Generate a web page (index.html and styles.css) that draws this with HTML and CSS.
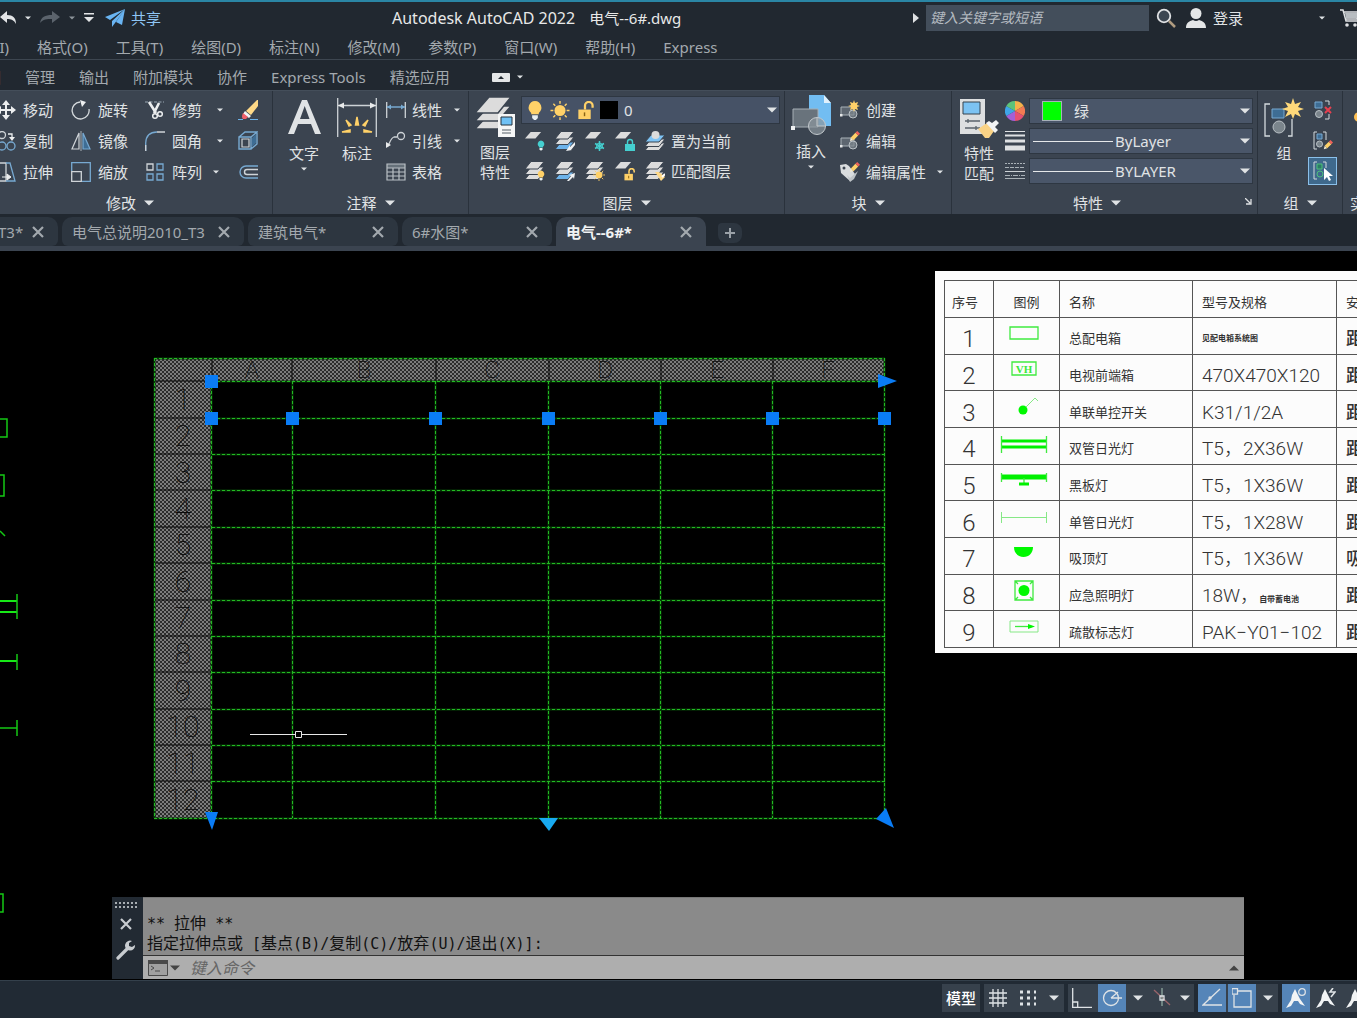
FILE: index.html
```
<!DOCTYPE html>
<html lang="zh-CN">
<head>
<meta charset="utf-8">
<meta name="viewport" content="width=device-width, initial-scale=1">
<title>Autodesk AutoCAD 2022 电气--6#.dwg</title>
<link rel="stylesheet" href="styles.css">
</head>
<body>
<svg class="sprite" aria-hidden="true">
  <defs>
    <symbol id="caret" viewBox="0 0 10 6"><path d="M0 0.500h10L5 5.500z" fill="currentColor"/></symbol>
    <symbol id="close" viewBox="0 0 12 12"><path d="M1 1l10 10M11 1L1 11" stroke="currentColor" stroke-width="2.200" fill="none"/></symbol>
    <symbol id="sheet" viewBox="0 0 20 20"><path d="M6 1h11l-6 7H0z" fill="#dcdcdc"/></symbol>
    <symbol id="stack" viewBox="0 0 20 20"><g fill="#dcdcdc" stroke="#3b4450"><path d="M6 11h13l-6 7.500H0z"/><path d="M6 6h13l-6 7.500H0z"/><path d="M6 0.500h13l-6 7.500H0z"/></g></symbol>
    <symbol id="stack-blue" viewBox="0 0 20 20"><g fill="#dcdcdc" stroke="#3b4450"><path d="M6 11h13l-6 7.500H0z" fill="#6db3ea"/><path d="M6 6h13l-6 7.500H0z"/><path d="M6 0.500h13l-6 7.500H0z"/></g></symbol>
    <symbol id="lock" viewBox="0 0 20 20"><path d="M3 9h13v10H3z" fill="currentColor"/><path d="M10 9V5a3.500 3.500 0 0 1 8 0v2" stroke="currentColor" stroke-width="2.400" fill="none"/><path d="M9.500 12v4" stroke="#8a6414" stroke-width="1.500"/></symbol>
    <symbol id="bulb" viewBox="0 0 20 20"><path d="M10 0a7 7 0 0 0-4 12.500V14h8v-1.500A7 7 0 0 0 10 0z" fill="currentColor"/><path d="M7 15h6v3l-2 2H9l-2-2z" fill="#e8eef0"/></symbol>
    <symbol id="sun" viewBox="0 0 20 20"><circle cx="10" cy="10" r="5.800" fill="#ffd168"/><path d="M10 0v3M10 17v3M0 10h3M17 10h3M3 3l2 2M15 15l2 2M17 3l-2 2M5 15l-2 2" stroke="#ffd168" stroke-width="1.500"/></symbol>
    <symbol id="pencil" viewBox="0 0 12 12"><path d="M1 11l1-4 3 3z" fill="#f3ead0"/><path d="M2 7l5-5 3 3-5 5z" fill="#ffd168"/><path d="M7 2l2-2 3 3-2 2z" fill="#f0625a"/></symbol>
    <symbol id="block" viewBox="0 0 20 20"><path d="M1 7h13v8H1z" fill="#5d6670" stroke="#aab2b8"/><circle cx="13" cy="14" r="4" fill="#7d878e" fill-opacity=".7" stroke="#b9c0c5"/><path d="M0 14h2.500v2.500H0z" fill="#e4e6e7"/></symbol>
    <symbol id="person-mark" viewBox="0 0 20 20"><path d="M9 1l3 6 2 4 5 7-5-2-2-3h-4l-3 5-5 2 5-8 1-5z" fill="#f2f4f5"/></symbol>
  </defs>
</svg>

<header class="titlebar">
  <div class="quick-access">
    <button aria-label="放弃"><svg width="16" height="14" viewBox="0 0 16 14"><path d="M0 6l7-6v4c6 0 9 3 9 9-2-4-5-5-9-5v4z" fill="#e2e4e6"/></svg></button>
    <button aria-label="放弃列表"><svg class="caret-s"><use href="#caret"/></svg></button>
    <button aria-label="重做" class="faded"><svg width="20" height="13" viewBox="0 0 20 13"><path d="M20 6l-8-6v4C5 4 1 6 0 12c3-4 7-4 12-4v4z" fill="#5b636c"/></svg></button>
    <button aria-label="重做列表"><svg class="caret-s dim"><use href="#caret"/></svg></button>
    <button aria-label="自定义快速访问工具栏"><svg width="10" height="10" viewBox="0 0 10 10"><path d="M0 0h10v1.500H0zM0 4h10L5 9z" fill="#e2e4e6"/></svg></button>
    <a class="share" href="#share"><svg width="20" height="18" viewBox="0 0 20 18"><path d="M20 0L0 8l5 3zM20 0L7 12v6l3-4zM20 0l-9 13 6 3z" fill="#69b4f2"/></svg>共享</a>
  </div>
  <h1 class="app-title">Autodesk AutoCAD 2022<span>电气--6#.dwg</span></h1>
  <div class="account">
    <svg class="search-toggle" width="6" height="10" viewBox="0 0 6 10"><path d="M0 0l6 5-6 5z" fill="#dfe1e3"/></svg>
    <input class="search" type="text" aria-label="搜索" placeholder="键入关键字或短语">
    <button aria-label="搜索"><svg width="20" height="20" viewBox="0 0 20 20"><circle cx="8" cy="8" r="6.300" fill="#3d4752" stroke="#dfe1e3" stroke-width="1.800"/><path d="M13 13l6 6" stroke="#b09c80" stroke-width="2.500"/></svg></button>
    <button class="login"><svg width="20" height="20" viewBox="0 0 20 20"><circle cx="10" cy="5.500" r="5.500" fill="#e4e6e7"/><path d="M0 20c0-5 3-7 7-8q3 2 6 0c4 1 7 3 7 8z" fill="#e4e6e7"/></svg>登录</button>
    <button class="account-menu" aria-label="账户菜单"><svg class="caret-s"><use href="#caret"/></svg></button>
    <button aria-label="应用商店"><svg width="20" height="18" viewBox="0 0 20 18"><path d="M0 1h3l3 11h12M4 3h15l-2 7H6" fill="none" stroke="#dfe1e3" stroke-width="1.500"/><path d="M5 4h13l-1 5H6z" fill="#b8bdc1"/><circle cx="7" cy="16" r="1.800" fill="#dfe1e3"/><circle cx="15" cy="16" r="1.800" fill="#dfe1e3"/></svg></button>
  </div>
</header>

<nav class="menubar" aria-label="菜单">
  <a href="#insert">插入(I)</a><a href="#format">格式(O)</a><a href="#tools">工具(T)</a><a href="#draw">绘图(D)</a><a href="#dimension">标注(N)</a><a href="#modify">修改(M)</a><a href="#parametric">参数(P)</a><a href="#window">窗口(W)</a><a href="#help">帮助(H)</a><a href="#express">Express</a>
</nav>

<nav class="ribbon-tabs" aria-label="功能区选项卡">
  <a href="#view">视图</a><a href="#manage">管理</a><a href="#output">输出</a><a href="#addins">附加模块</a><a href="#collaborate">协作</a><a href="#express-tools">Express Tools</a><a href="#featured">精选应用</a>
  <button class="ribbon-min" aria-label="最小化功能区"><svg width="18" height="9" viewBox="0 0 18 9"><rect width="18" height="9" rx="1" fill="#e4e6e7"/><path d="M6 6l3-3 3 3z" fill="#212830"/></svg><svg class="caret-s"><use href="#caret"/></svg></button>
</nav>

<section class="ribbon" aria-label="功能区">
  <div class="panel panel-modify">
    <div class="tools modify-grid">
      <button class="tool"><svg class="ico" viewBox="0 0 20 20"><path d="M10 0l4 5h-3v4h4V6l5 4-5 4v-3h-4v4h3l-4 5-4-5h3v-4H5v3l-5-4 5-4v3h4V5H6z" fill="#eceeef"/></svg>移动</button>
      <button class="tool"><svg class="ico" viewBox="0 0 20 20"><path d="M9 2a8.500 8.500 0 1 0 9 7" fill="none" stroke="#d5dadd" stroke-width="1.300"/><path d="M9 0l6 2-4 5z" fill="#eceeef"/></svg>旋转</button>
      <div class="split"><button class="tool"><svg class="ico" viewBox="0 0 20 20"><path d="M0 2h19" stroke="#9aa7b2" stroke-dasharray="3 1.500"/><path d="M4 2l7 11M14 3l-5 10" stroke="#eceeef" stroke-width="2.600"/><circle cx="10" cy="16" r="2.300" fill="none" stroke="#eceeef" stroke-width="1.500"/><circle cx="15" cy="14" r="2.300" fill="none" stroke="#eceeef" stroke-width="1.500"/></svg>修剪</button><button aria-label="修剪选项"><svg class="caret-s"><use href="#caret"/></svg></button></div>
      <button class="tool" aria-label="删除"><svg class="ico" viewBox="0 0 20 20"><path d="M0 19.500h5M12 19.500h8" stroke="#6db3ea"/><path d="M8 11L19 0h1v6l-7 9z" fill="#ffd987"/><path d="M7 11l6 5-2 2-6-4z" fill="#f4f4f4"/><path d="M5 13l5 4-2 2H5q-2-2 0-6z" fill="#f0606a"/></svg></button>

      <button class="tool"><svg class="ico" viewBox="0 0 20 20"><circle cx="6" cy="4" r="3.500" fill="none" stroke="#cfd4d8" stroke-width="1.300"/><path d="M12 3h4v4" fill="none" stroke="#eceeef" stroke-width="1.300"/><path d="M13 6h6l-3 4z" fill="#eceeef"/><circle cx="6" cy="15" r="4" fill="none" stroke="#77a9d1" stroke-width="1.300"/><circle cx="15" cy="15" r="4" fill="none" stroke="#77a9d1" stroke-width="1.300"/></svg>复制</button>
      <button class="tool"><svg class="ico" viewBox="0 0 20 20"><path d="M8 2v16H1z" fill="none" stroke="#cfd4d8" stroke-width="1.200"/><path d="M12 2v16h7z" fill="#3e6d94" stroke="#77a9d1" stroke-width="1.200"/><path d="M10 0v20" stroke="#aab2b8"/></svg>镜像</button>
      <div class="split"><button class="tool"><svg class="ico" viewBox="0 0 20 20"><path d="M.7 20v-8C1 5 5 1 12 1" fill="none" stroke="#77a9d1" stroke-width="1.300"/><path d="M12 1h8M.7 14v6" stroke="#cfd4d8" stroke-width="1.300"/></svg>圆角</button><button aria-label="圆角选项"><svg class="caret-s"><use href="#caret"/></svg></button></div>
      <button class="tool" aria-label="分解"><svg class="ico" viewBox="0 0 20 20"><path d="M1 6h12v12H1zM1 6l6-5h12l-6 5M19 1v12l-6 5M13 6v12" fill="none" stroke="#77a9d1" stroke-width="1.400"/><path d="M4 8h7v8H4z" fill="none" stroke="#cfd4d8" stroke-width="1.200"/><path d="M14 7l4-4v9l-4 4z" fill="#3e6d94"/></svg></button>

      <button class="tool"><svg class="ico" viewBox="0 0 20 20"><path d="M2 1h8v18H2z" fill="none" stroke="#cfd4d8" stroke-width="1.300"/><path d="M10 1h4l5 18h-9" fill="none" stroke="#77a9d1" stroke-width="1.300"/><path d="M6 15h7M11 12l4 3-4 3z" stroke="#eceeef" fill="#eceeef"/></svg>拉伸</button>
      <button class="tool"><svg class="ico" viewBox="0 0 20 20"><path d="M.7 9V.7h18.600v18.600H11" fill="none" stroke="#77a9d1" stroke-width="1.300"/><path d="M.7 9.700h9.600v9.600H.7z" fill="none" stroke="#cfd4d8" stroke-width="1.300"/></svg>缩放</button>
      <div class="split narrow"><button class="tool"><svg class="ico" viewBox="0 0 20 20"><path d="M2 2h6v6H2z" fill="none" stroke="#cfd4d8" stroke-width="1.300"/><path d="M12 2h6v6h-6zM2 12h6v6H2zM12 12h6v6h-6z" fill="none" stroke="#77a9d1" stroke-width="1.300"/></svg>阵列</button><button aria-label="阵列选项"><svg class="caret-s"><use href="#caret"/></svg></button></div>
      <button class="tool" aria-label="偏移"><svg class="ico" viewBox="0 0 20 20"><path d="M20 4H8a6 6 0 0 0 0 12h12" fill="none" stroke="#77a9d1" stroke-width="1.400"/><path d="M20 7.500H9a2.500 2.500 0 0 0 0 5h11" fill="none" stroke="#cfd4d8" stroke-width="1.400"/></svg></button>
    </div>
    <button class="panel-title">修改<svg class="caret-m"><use href="#caret"/></svg></button>
  </div>

  <div class="panel panel-annotate">
    <div class="tools row">
      <button class="big"><svg class="ico-lg" viewBox="0 0 40 40"><path d="M4 37L18 3h5l14 34h-6l-4-10H14l-4 10zM16 22h9.500L20.700 9z" fill="#e0e3e5" fill-rule="evenodd"/></svg>文字<svg class="caret-s"><use href="#caret"/></svg></button>
      <button class="big"><svg class="ico-lg" viewBox="0 0 40 40"><path d="M.7 1v39M39.300 1v39M1 8.500h38" stroke="#cdd2d6" stroke-width="1.300"/><path d="M1 8.500l6-3v6zM39 8.500l-6-3v6z" fill="#e8eaeb"/><path d="M18.500 28l1.500-8 1.500 8zM12 29l-3-6 5 5zM28 29l3-6-5 5zM13 35H5l8-2zM27 35h8l-8-2z" fill="#ffd168" stroke="#ffd168" stroke-width="1.500"/></svg>标注</button>
      <div class="column">
        <div class="split"><button class="tool"><svg class="ico" viewBox="0 0 20 20"><path d="M.7 2v16M19.300 2v16" stroke="#cdd2d6" stroke-width="1.300"/><path d="M1 7h18" stroke="#77a9d1" stroke-width="1.500"/><path d="M1 7l4-2.500v5zM19 7l-4-2.500v5z" fill="#77a9d1"/></svg>线性</button><button aria-label="线性选项"><svg class="caret-s"><use href="#caret"/></svg></button></div>
        <div class="split"><button class="tool"><svg class="ico" viewBox="0 0 20 20"><circle cx="15" cy="5" r="3.500" fill="none" stroke="#cdd2d6" stroke-width="1.300"/><path d="M11 6H8c-3 1-4 5-6 9" fill="none" stroke="#cdd2d6" stroke-width="1.300"/><path d="M0 17V11l5 3z" fill="#e8eaeb"/></svg>引线</button><button aria-label="引线选项"><svg class="caret-s"><use href="#caret"/></svg></button></div>
        <button class="tool"><svg class="ico" viewBox="0 0 20 20"><path d="M1 2h18v4H1z" fill="#66717a"/><path d="M1 2h18v16H1zM1 6h18M1 10h18M1 14h18M7 6v12M13 6v12" fill="none" stroke="#b9c0c5" stroke-width="1.200"/></svg>表格</button>
      </div>
    </div>
    <button class="panel-title">注释<svg class="caret-m"><use href="#caret"/></svg></button>
  </div>

  <div class="panel panel-layer">
    <div class="tools row">
      <button class="big"><svg class="ico-lg" viewBox="0 0 40 40"><g fill="#dcdcdc" stroke="#3b4450" stroke-width="1.500"><path d="M14 17h22L23 32H0z"/><path d="M14 9h22L23 24H0z"/><path d="M14 0h22L23 16H0z"/></g><path d="M23 17h17v23H23z" fill="#f5f6f6"/><path d="M26 20h11v8H26z" fill="#6fc1f5" stroke="#26323d"/><path d="M27 33h9M27 36h9" stroke="#555e66"/></svg>图层<br>特性</button>
      <div class="layer-tools">
        <div class="combo layer-combo">
          <svg class="ico gold" viewBox="0 0 20 20"><use href="#bulb"/></svg>
          <svg class="ico"><use href="#sun"/></svg>
          <svg class="ico gold"><use href="#lock"/></svg>
          <span class="swatch black"></span>
          <select aria-label="图层"><option>0</option></select>
          <svg class="caret-m"><use href="#caret"/></svg>
        </div>
        <div class="icon-row">
          <button aria-label="关闭图层"><svg class="ico" viewBox="0 0 20 20"><use href="#sheet" width="19" height="19"/><use href="#bulb" x="11" y="9" width="10" height="11" color="#45cfd0"/></svg></button>
          <button aria-label="隔离"><svg class="ico" viewBox="0 0 20 20"><use href="#stack-blue"/><path d="M20 11l-5 5v-2l-4 6 6-1h-1l4-5z" fill="#f0f2f3"/></svg></button>
          <button aria-label="冻结"><svg class="ico" viewBox="0 0 20 20"><use href="#sheet" width="19" height="19"/><path d="M14.500 10v10M10 12.500l9 5M10 17.500l9-5" stroke="#45cfd0" stroke-width="1.500"/><circle cx="14.500" cy="15" r="3" fill="none" stroke="#45cfd0"/></svg></button>
          <button aria-label="锁定"><svg class="ico" viewBox="0 0 20 20"><use href="#sheet" width="19" height="19"/><path d="M10 13h10v7H10z" fill="#45cfd0"/><path d="M12.500 13v-2a2.500 2.500 0 0 1 5 0v2" stroke="#45cfd0" stroke-width="1.400" fill="none"/></svg></button>
          <button class="tool"><svg class="ico" viewBox="0 0 20 20"><g stroke="#3b4450"><path d="M6 12h14l-6 7.500H0z" fill="#dcdcdc"/><path d="M6 8h14l-6 7.500H0z" fill="#dcdcdc"/><path d="M6 4h14l-6 7H0z" fill="#7fc4f5"/></g><circle cx="10.500" cy="4" r="4" fill="#dcdcdc"/></svg>置为当前</button>
        </div>
        <div class="icon-row">
          <button aria-label="打开所有图层"><svg class="ico" viewBox="0 0 20 20"><use href="#stack"/><use href="#bulb" x="11" y="9" width="10" height="11" color="#ffd168"/></svg></button>
          <button aria-label="取消隔离"><svg class="ico" viewBox="0 0 20 20"><use href="#stack-blue"/><path d="M12 20l4-5-2-1 6-2-1 6-1-2-4 4z" fill="#f0f2f3"/></svg></button>
          <button aria-label="解冻所有图层"><svg class="ico" viewBox="0 0 20 20"><use href="#stack"/><use href="#sun" x="8" y="8" width="12" height="12"/></svg></button>
          <button aria-label="解锁"><svg class="ico" viewBox="0 0 20 20"><use href="#sheet" width="19" height="19"/><use href="#lock" x="7" y="7" width="14" height="13" color="#ffd168"/></svg></button>
          <button class="tool"><svg class="ico" viewBox="0 0 20 20"><use href="#stack"/><path d="M10 11l4 0 6 5-4 4z" fill="#ffd987"/><path d="M17 16l3-3" stroke="#fff" stroke-width="2"/></svg>匹配图层</button>
        </div>
      </div>
    </div>
    <button class="panel-title">图层<svg class="caret-m"><use href="#caret"/></svg></button>
  </div>

  <div class="panel panel-block">
    <div class="tools row">
      <button class="big"><svg class="ico-lg" viewBox="0 0 40 40"><path d="M18 0h15l7 8v23H18z" fill="#72bdf2"/><path d="M33 0v8h7z" fill="#dff0fc"/><path d="M2 14h25v18H2z" fill="#69737c" stroke="#a7afb5"/><circle cx="26" cy="31" r="8.500" fill="#8c969d" fill-opacity=".7" stroke="#c3c9cd"/><path d="M26 23v8h9" stroke="#c3c9cd" fill="none"/><path d="M0 31h4v4H0z" fill="#eef0f1"/></svg>插入<svg class="caret-s"><use href="#caret"/></svg></button>
      <div class="column">
        <button class="tool"><svg class="ico" viewBox="0 0 20 20"><use href="#block"/><path d="M14 0l1 3 3-1-1 3 3 1-3 1 1 3-3-1-1 3-1-3-3 1 1-3-3-1 3-1-1-3 3 1z" fill="#ffd168"/></svg>创建</button>
        <button class="tool"><svg class="ico" viewBox="0 0 20 20"><use href="#block"/><use href="#pencil" x="9" y="0" width="11" height="11"/></svg>编辑</button>
        <div class="split wide"><button class="tool"><svg class="ico" viewBox="0 0 20 20"><path d="M0 3l6-1 3 2 6 8-5 7L1 11z" fill="#d9dcde"/><circle cx="4" cy="6" r="1.500" fill="#3b4450"/><path d="M7 13l3 3 8-7-4 8-4 3z" fill="#bfc4c8"/><use href="#pencil" x="9" y="0" width="11" height="11"/></svg>编辑属性</button><button aria-label="编辑属性选项"><svg class="caret-s"><use href="#caret"/></svg></button></div>
      </div>
    </div>
    <button class="panel-title">块<svg class="caret-m"><use href="#caret"/></svg></button>
  </div>

  <div class="panel panel-properties">
    <div class="tools row">
      <button class="big"><svg class="ico-lg" viewBox="0 0 40 40"><path d="M1 1h25v35H1z" fill="#dddfe0"/><path d="M4 4h17v12H4z" fill="#7cc3f3" stroke="#37424d"/><path d="M6 23h15M6 30h15M9 21v4M17 28v4" stroke="#59636b" stroke-width="1.300"/><path d="M19 31l9-6 7 8-5 7h-4z" fill="#fad386"/><path d="M27 25l3-2 3 2 4-3 3 3-4 4 3 3-3 3z" fill="#f2f4f5"/></svg>特性<br>匹配</button>
      <div class="column icon-col">
        <svg class="ico" viewBox="0 0 20 20"><path d="M10 10L10 0A10 10 0 0 1 18.700 5z" fill="#f6b14a"/><path d="M10 10l8.700-5a10 10 0 0 1 0 10z" fill="#f37b53"/><path d="M10 10l8.700 5A10 10 0 0 1 10 20z" fill="#e65072"/><path d="M10 10v10a10 10 0 0 1-8.700-5z" fill="#a45fd6"/><path d="M10 10l-8.700 5a10 10 0 0 1 0-10z" fill="#3fa5e8"/><path d="M10 10L1.300 5A10 10 0 0 1 10 0z" fill="#5dc27a"/></svg>
        <svg class="ico" viewBox="0 0 20 20"><path d="M0 .5h20" stroke="#dfe1e3"/><path d="M0 4.500h20" stroke="#dfe1e3" stroke-width="2"/><path d="M0 10h20" stroke="#dfe1e3" stroke-width="3"/><path d="M0 17h20" stroke="#dfe1e3" stroke-width="5"/></svg>
        <svg class="ico" viewBox="0 0 20 20"><path d="M0 2.500h20" stroke="#aab2b8" stroke-dasharray="2 1"/><path d="M0 6.500h20" stroke="#aab2b8" stroke-dasharray="4 1"/><path d="M0 10.500h20" stroke="#cdd2d6"/><path d="M0 14.500h20" stroke="#aab2b8" stroke-dasharray="5 1 1 1"/><path d="M0 17.500h20" stroke="#aab2b8"/></svg>
      </div>
      <div class="property-combos">
        <div class="combo"><span class="swatch green"></span><select class="color-select" aria-label="对象颜色"><option>绿</option></select><svg class="caret-m"><use href="#caret"/></svg></div>
        <div class="combo"><span class="line-sample"></span><select aria-label="线宽"><option>ByLayer</option></select><svg class="caret-m"><use href="#caret"/></svg></div>
        <div class="combo"><span class="line-sample"></span><select aria-label="线型"><option>BYLAYER</option></select><svg class="caret-m"><use href="#caret"/></svg></div>
      </div>
    </div>
    <div class="title-row"><button class="panel-title">特性<svg class="caret-m"><use href="#caret"/></svg></button><button aria-label="特性对话框"><svg width="7" height="7" viewBox="0 0 7 7"><path d="M0 0l5 5M6 1v5H1" stroke="#dfe1e3" stroke-width="1.300" fill="none"/></svg></button></div>
  </div>

  <div class="panel panel-group">
    <div class="tools row">
      <button class="big"><svg class="ico-lg" viewBox="0 0 40 40"><path d="M6 7H1v32h5M24 39h4V22" fill="none" stroke="#d5dadd" stroke-width="1.300"/><path d="M8 12h12v9H8z" fill="#3e6d94" stroke="#77a9d1"/><circle cx="15" cy="30" r="6" fill="#7b858c" stroke="#b9c0c5"/><path d="M29 1l2 6 6-2-3 5 6 2-6 2 3 6-6-3-2 5-2-5-6 3 3-6-6-2 6-2-3-5 6 2z" fill="#ffd97a"/></svg>组</button>
      <div class="column">
        <button class="tool" aria-label="解除编组"><svg class="ico" viewBox="0 0 20 20"><path d="M2 2h7v6H2z" fill="#3e6d94" stroke="#77a9d1"/><circle cx="6" cy="14" r="3.500" fill="#7b858c" stroke="#b9c0c5"/><path d="M12 1h4v4M16 14v5h-4" stroke="#d5dadd" fill="none"/><path d="M12 7l6 6M18 7l-6 6" stroke="#e8404f" stroke-width="2"/></svg></button>
        <button class="tool" aria-label="组编辑"><svg class="ico" viewBox="0 0 20 20"><path d="M4 1H1v17h3M10 1h3v8" stroke="#d5dadd" fill="none"/><path d="M4 3h5v5H4z" fill="#3e6d94" stroke="#77a9d1"/><circle cx="6.500" cy="13" r="3" fill="#7b858c" stroke="#b9c0c5"/><use href="#pencil" x="10" y="9" width="10" height="10"/></svg></button>
        <button class="tool pressed" aria-label="启用组选择"><svg class="ico" viewBox="0 0 20 20"><path d="M4 1H1v17h3M10 1h3v6" stroke="#d5dadd" fill="none"/><path d="M4 3h5v5H4z" fill="#2c7c66" stroke="#4cc07c"/><circle cx="7" cy="13" r="3" fill="none" stroke="#4cc07c"/><path d="M11 7v12l3-3 2 4 2-1-2-4h4z" fill="#fff"/></svg></button>
      </div>
    </div>
    <button class="panel-title">组<svg class="caret-m"><use href="#caret"/></svg></button>
  </div>

  <div class="panel panel-utilities">
    <div class="tools row"><button class="big"><svg class="ico-lg" viewBox="0 0 40 40"><circle cx="9" cy="20" r="5" fill="#ffc052"/></svg></button></div>
    <button class="panel-title">实用工具</button>
  </div>
</section>

<nav class="doc-tabs" aria-label="文件选项卡">
  <div class="doc-tab first"><a href="#doc1">T3*</a><button aria-label="关闭"><svg><use href="#close"/></svg></button></div>
  <div class="doc-tab long"><a href="#doc2">电气总说明2010_T3</a><button aria-label="关闭"><svg><use href="#close"/></svg></button></div>
  <div class="doc-tab"><a href="#doc3">建筑电气*</a><button aria-label="关闭"><svg><use href="#close"/></svg></button></div>
  <div class="doc-tab"><a href="#doc4">6#水图*</a><button aria-label="关闭"><svg><use href="#close"/></svg></button></div>
  <div class="doc-tab active"><a href="#doc5">电气--6#*</a><button aria-label="关闭"><svg><use href="#close"/></svg></button></div>
  <button class="new-tab" aria-label="新建"><svg width="12" height="12" viewBox="0 0 12 12"><path d="M6 1v10M1 6h10" stroke="#9ba2a8" stroke-width="2"/></svg></button>
</nav>

<main class="canvas">
  <svg class="drawing" role="img" aria-label="图形区">
    <defs>
      <pattern id="hatch" width="4" height="4" patternUnits="userSpaceOnUse"><rect width="4" height="4" fill="#2c2c2c"/><path d="M0 0h2v2H0zM2 2h2v2H2z" fill="#7c7c7c"/></pattern>
      <path id="grid" d="M154 107.500h731M154.500 107v460M154 567.500h731M212 130.500h673M212 167.500h673M212 203.500h673M212 239.500h673M212 276.500h673M212 312.500h673M212 349.500h673M212 385.500h673M212 421.500h673M212 458.500h673M212 494.500h673M212 530.500h673M211.500 130v437M292.500 130v437M435.500 130v437M548.500 130v437M660.500 130v437M772.500 130v437M884.500 107v460"/>
    </defs>
    <g class="symbols">
      <path d="M-10 168H7v18H-10M-10 224H4v21H-10M0 280l5 5M-10 643H3v18H-10"/>
      <path class="thick" d="M0 350h17M0 361h17M0 410h17"/>
      <path d="M17 343v25M17 403v16M0 477h17M17 469v16"/>
    </g>
    <path d="M154 107h731v23H212v437H154z" fill="url(#hatch)"/>
    <path class="header-lines" d="M154 130h58M212 107v23M292 107v23M436 107v23M549 107v23M661 107v23M773 107v23M154 167h58M154 203h58M154 239h58M154 276h58M154 312h58M154 349h58M154 385h58M154 421h58M154 458h58M154 494h58M154 530h58"/>
    <g class="col-names"><text x="252" y="127">A</text><text x="364" y="127">B</text><text x="492" y="127">C</text><text x="605" y="127">D</text><text x="717" y="127">E</text><text x="828" y="127">F</text></g>
    <g class="row-names"><text x="183" y="159">1</text><text x="183" y="195">2</text><text x="183" y="232">3</text><text x="183" y="268">4</text><text x="183" y="304">5</text><text x="183" y="341">6</text><text x="183" y="377">7</text><text x="183" y="413">8</text><text x="183" y="450">9</text><text x="183" y="486">10</text><text x="183" y="523">11</text><text x="183" y="559">12</text></g>
    <use class="grid-base" href="#grid"/>
    <use class="grid-dash" href="#grid"/>
    <g class="grips">
      <path d="M205 124h13v13h-13zM205 161h13v13h-13zM286 161h13v13h-13zM429 161h13v13h-13zM542 161h13v13h-13zM654 161h13v13h-13zM766 161h13v13h-13zM878 161h13v13h-13z"/>
      <path d="M878 123l19 7-19 7zM205 561h13l-6 18zM886 557l8 20-18-9z"/>
      <path class="row-grip" d="M539 567h19l-9 13z"/>
    </g>
    <path class="cursor" d="M250 483.500h45M302 483.500h45M295.500 480.500h6v6h-6z"/>
  </svg>

  <div class="legend">
    <table>
      <colgroup><col class="c-no"><col class="c-symbol"><col class="c-name"><col class="c-spec"><col class="c-install"></colgroup>
      <thead><tr><th>序号</th><th>图例</th><th>名称</th><th>型号及规格</th><th>安装方式</th></tr></thead>
      <tbody>
        <tr><td>1</td><td><svg viewBox="0 0 48 28"><path d="M10 5h28v12H10z" class="ln"/></svg></td><td>总配电箱</td><td class="small">见配电箱系统图</td><td>距地</td></tr>
        <tr><td>2</td><td><svg viewBox="0 0 48 28"><path d="M12 4h24v13H12z" class="ln"/><text x="24" y="15">VH</text></svg></td><td>电视前端箱</td><td>470X470X120</td><td>距地</td></tr>
        <tr><td>3</td><td><svg viewBox="0 0 48 28"><circle cx="23" cy="15" r="4.500" class="fl"/><path d="M26 12l9-9 3 3" class="thin"/></svg></td><td>单联单控开关</td><td>K31/1/2A</td><td>距地</td></tr>
        <tr><td>4</td><td><svg viewBox="0 0 48 28"><path d="M1 9h46M1 15h46" class="bar"/><path d="M1.500 4v17M46.500 4v17" class="ln"/></svg></td><td>双管日光灯</td><td>T5，2X36W</td><td>距地</td></tr>
        <tr><td>5</td><td><svg viewBox="0 0 48 28"><path d="M1 9h46" class="bar wide"/><path d="M1.500 5v9M46.500 5v9M24 10v6" class="ln"/><path d="M19 16h10" class="bar"/></svg></td><td>黑板灯</td><td>T5，1X36W</td><td>距地</td></tr>
        <tr><td>6</td><td><svg viewBox="0 0 48 28"><path d="M1 12.500h46M1.500 7v11M46.500 7v11" class="thin"/></svg></td><td>单管日光灯</td><td>T5，1X28W</td><td>距地</td></tr>
        <tr><td>7</td><td><svg viewBox="0 0 48 28"><path d="M14 5h19c0 6-4 10-9.500 10S14 11 14 5z" class="fl"/></svg></td><td>吸顶灯</td><td>T5，1X36W</td><td>吸顶</td></tr>
        <tr><td>8</td><td><svg viewBox="0 0 48 28"><path d="M15 3h18v19H15zM15 3l3 3M33 3l-3 3M15 22l3-3M33 22l-3-3" class="ln"/><circle cx="24" cy="12.500" r="5.500" class="fl"/></svg></td><td>应急照明灯</td><td>18W，<span class="small">自带蓄电池</span></td><td>距地</td></tr>
        <tr><td>9</td><td><svg viewBox="0 0 48 28"><path d="M10 6h28v11H10z" class="thin"/><path d="M15 11.500h17" class="ln"/><path d="M28 9l7 2.500-7 2.500z" class="fl"/></svg></td><td>疏散标志灯</td><td>PAK−Y01−102</td><td>距地</td></tr>
      </tbody>
    </table>
  </div>

  <section class="command" aria-label="命令行">
    <div class="command-side">
      <span class="grip-dots"></span>
      <button aria-label="关闭命令行"><svg width="12" height="12"><use href="#close"/></svg></button>
      <button aria-label="自定义"><svg width="20" height="20" viewBox="0 0 20 20"><path d="M2 18L12 8" stroke="#c8ccd0" stroke-width="3.200" stroke-linecap="round"/><path d="M16 1a5 5 0 1 0 3 4l-3 2-3-1V3z" fill="#c8ccd0"/></svg></button>
    </div>
    <div class="command-main">
      <div class="history">
        <p>** <b>拉伸</b> **</p>
        <p><b>指定拉伸点或</b> [<b>基点</b>(B)/<b>复制</b>(C)/<b>放弃</b>(U)/<b>退出</b>(X)]:</p>
      </div>
      <div class="prompt">
        <button aria-label="最近使用的命令"><svg width="20" height="16" viewBox="0 0 20 16"><path d="M.5.500h19v15H.5z" fill="#a0a0a0" stroke="#4a4a4a"/><path d="M0 0h20v4H0z" fill="#4a4a4a"/><path d="M3 6l3 2-3 2M7 11h5" stroke="#4a4a4a" fill="none"/></svg><svg class="caret-m"><use href="#caret"/></svg></button>
        <input type="text" aria-label="命令" placeholder="键入命令">
        <button aria-label="展开历史"><svg class="caret-m flip"><use href="#caret"/></svg></button>
      </div>
    </div>
  </section>
</main>

<footer class="statusbar">
  <div class="group"><button class="model">模型</button></div>
  <div class="group">
    <button aria-label="栅格"><svg viewBox="0 0 20 20"><path d="M5 1v18M10 1v18M15 1v18M1 5h18M1 10h18M1 15h18"/></svg></button>
    <button aria-label="捕捉"><svg viewBox="0 0 20 20"><path class="dots" d="M2 4h16M2 10h16M2 16h16"/></svg></button>
    <button class="drop" aria-label="捕捉选项"><svg class="caret-m"><use href="#caret"/></svg></button>
  </div>
  <div class="group">
    <button aria-label="正交"><svg viewBox="0 0 20 20"><path d="M.7 0v19.300H20M.7 14h5v5"/></svg></button>
    <button class="on" aria-label="极轴追踪"><svg viewBox="0 0 20 20"><circle cx="9" cy="10" r="7.500"/><path d="M9 10h11M9 10l7-6"/></svg></button>
    <button class="drop" aria-label="极轴选项"><svg class="caret-m"><use href="#caret"/></svg></button>
    <button class="iso" aria-label="等轴测"><svg viewBox="0 0 20 20"><path stroke="#99646a" d="M2 2l16 15"/><path d="M10 0v18" stroke="#8ea8a0"/><path d="M8 8h4v4H8z"/></svg></button>
    <button class="drop slim" aria-label="等轴测选项"><svg class="caret-m"><use href="#caret"/></svg></button>
  </div>
  <div class="group snaps">
    <button class="on" aria-label="对象捕捉追踪"><svg viewBox="0 0 20 20"><path d="M20 17H1L18 1"/><circle cx="8" cy="10" r="1" /></svg></button>
    <button class="on" aria-label="对象捕捉"><svg viewBox="0 0 20 20"><path d="M6 3h13v16H2V7M0 .7h5.500v5.500H0z"/></svg></button>
    <button class="drop" aria-label="对象捕捉选项"><svg class="caret-m"><use href="#caret"/></svg></button>
  </div>
  <div class="group">
    <button class="on" aria-label="注释可见性"><svg viewBox="0 0 20 20"><use href="#person-mark"/><circle cx="16" cy="4" r="3.300"/></svg></button>
    <button aria-label="自动缩放"><svg viewBox="0 0 20 20"><use href="#person-mark"/><path d="M17 0l-3 4h5l-4 5" stroke-width="1.600"/></svg></button>
    <button aria-label="注释比例"><svg viewBox="0 0 20 20"><use href="#person-mark"/></svg></button>
  </div>
</footer>
</body>
</html>
```

FILE: styles.css
```
* { box-sizing: border-box; }

body {
  margin: 0;
  min-height: 100vh;
  display: flex;
  flex-direction: column;
  overflow-x: hidden;
  background: #212830;
  color: #e0e3e5;
  font: 15px/20px "Noto Sans", "Noto Sans CJK SC", sans-serif;
}

button, input, select {
  font: inherit;
  color: inherit;
  background: none;
  border: 0;
  padding: 0;
  margin: 0;
  outline: 0;
}

button {
  display: flex;
  align-items: center;
  justify-content: center;
  flex: none;
  white-space: nowrap;
}

a { color: inherit; text-decoration: none; white-space: nowrap; }
svg { display: block; flex: none; }

.sprite { position: absolute; width: 0; height: 0; }
.ico { width: 20px; height: 20px; }
.ico-lg { width: 40px; height: 40px; }
.gold { color: #ffd168; }
.caret-s { width: 6px; height: 4px; }
.caret-m { width: 10px; height: 6px; }
.dim { color: #8d949a; }
.flip { transform: rotate(180deg); }

/* Title bar */
.titlebar {
  height: 35px;
  display: flex;
  align-items: center;
  border-top: 2px solid #2a86a5;
  padding-bottom: 2px;
  overflow: hidden;
}
.quick-access { flex: 0 0 392px; display: flex; align-items: center; gap: 9px; }
.share { display: flex; align-items: center; gap: 6px; color: #8fc6f5; margin-left: 2px; }
.app-title { margin: 0; font-size: 16px; font-weight: 400; white-space: nowrap; color: #e8e8e8; }
.app-title span { margin-left: 14px; font-size: 15px; }
.account { margin: 0 -3px 0 auto; display: flex; align-items: center; gap: 7px; }
.search {
  width: 223px;
  height: 26px;
  padding: 0 4px;
  background: #434e5b;
  font-size: 14px;
}
.search::placeholder { color: #b4bac0; font-style: italic; opacity: 1; }
.login { gap: 7px; margin-left: 3px; }
.account-menu { margin: 0 8px 0 69px; }

/* Menus */
.menubar, .ribbon-tabs { display: flex; align-items: center; color: #a3a9ae; overflow: hidden; }
.menubar { height: 25px; gap: 28px; border-bottom: 1px solid #3d4650; }
.menubar a:first-child { margin-left: -35px; }
.ribbon-tabs { height: 30px; gap: 24px; padding-top: 4px; }
.ribbon-tabs a:first-child { margin-left: -29px; }
.ribbon-min { gap: 7px; margin-left: 18px; color: #e0e3e5; }

/* Ribbon */
.ribbon { display: flex; height: 124px; background: #3b4450; overflow: hidden; border-top: 1px solid #444e5a; }
.panel {
  flex: none;
  display: flex;
  flex-direction: column;
  border-right: 1px solid #2a323c;
}
.tools { height: 97px; padding-top: 3px; }
.row, .split, .icon-row, .title-row { display: flex; }
.tool { height: 31px; gap: 7px; justify-content: flex-start; }
.split { align-items: center; gap: 15px; }
.split.narrow { gap: 11px; }
.split.wide { gap: 11px; }
.column { display: flex; flex-direction: column; }
.big { width: 40px; flex-direction: column; justify-content: flex-start; padding-top: 3px; align-self: flex-start; }
.big .ico-lg { margin-bottom: 6px; }
.big .caret-s { margin-top: 4px; }
.panel-title { gap: 8px; align-self: center; height: 26px; padding-top: 3px; }

.panel-modify { width: 285px; margin-left: -12px; padding-left: 8px; }
.panel-modify .panel-title { margin-right: 8px; }
.modify-grid { display: grid; grid-template-columns: 75px 74px 93px 20px; grid-auto-rows: 31px; }

.panel-annotate { width: 196px; }
.panel-annotate .row { padding-left: 11px; }
.panel-annotate .big + .big { margin-left: 13px; }
.panel-annotate .column { margin-left: 9px; }
.panel-annotate .tool { gap: 6px; }
.panel-annotate .split { gap: 12px; }

.panel-layer { width: 316px; }
.panel-layer .row { padding: 4px 4px 0 6px; gap: 6px; }
.panel-layer .big { padding-top: 2px; }
.panel-layer .ico-lg { margin-bottom: 5px; }
.layer-tools { flex: 1; padding-top: 1px; }
.icon-row { height: 30px; padding-left: 4px; gap: 10px; }
.icon-row:nth-child(2) { margin-top: 2px; }
.icon-row .tool { height: auto; gap: 6px; }

.panel-block { width: 167px; }
.panel-block .row { padding-left: 6px; gap: 9px; }
.panel-block .tool { gap: 6px; }
.panel-block .big { padding-top: 1px; }

.panel-properties { width: 306px; }
.panel-properties .row { padding: 4px 4px 0 7px; }
.panel-properties .ico-lg { margin-bottom: 5px; }
.icon-col { gap: 10px; margin: 6px 4px 0 6px; }
.property-combos { flex: 1; display: flex; flex-direction: column; gap: 4px; padding-top: 3px; }
.title-row { justify-content: space-between; padding: 0 5px 0 121px; }

.panel-group { width: 85px; }
.panel-group .row { padding-left: 6px; gap: 4px; }
.panel-group .tool { width: 30px; justify-content: center; }
.panel-group .pressed { height: 28px; width: 29px; margin-top: 1px; background: #3f698c; border: 1px solid #8bc0ea; }

.panel-utilities { width: 120px; border-right: 0; }
.panel-utilities .row { padding-left: 7px; }
.panel-utilities .panel-title { align-self: flex-start; padding-left: 7px; }

.combo {
  display: flex;
  align-items: center;
  height: 26px;
  padding-right: 2px;
  background: #4a5669;
  border: 1px solid #2e3742;
}
.combo select { flex: 1; min-width: 0; appearance: none; height: 24px; }
.layer-combo { height: 28px; padding-left: 3px; gap: 5px; background: #465266; }
.layer-combo .ico { height: 19px; width: 20px; }
.layer-combo select { padding-left: 1px; }
.swatch { width: 18px; height: 18px; flex: none; }
.swatch.black { background: #000; }
.swatch.green { width: 20px; height: 20px; background: #0f0; border: 1px solid #a7b0b8; margin: 0 12px; }
.line-sample { width: 80px; height: 1px; background: #e6e8ea; margin: 0 2px 0 3px; }

/* File tabs */
.doc-tabs {
  display: flex;
  align-items: flex-end;
  gap: 4px;
  height: 37px;
  border-bottom: 5px solid #3b4450;
  overflow: hidden;
}
.doc-tab {
  flex: none;
  width: 150px;
  height: 29px;
  padding: 0 14px 0 10px;
  display: flex;
  align-items: center;
  justify-content: space-between;
  background: #2d3640;
  border-radius: 10px 10px 6px 6px;
  color: #a3a9ae;
}
.doc-tab svg { width: 12px; height: 12px; }
.doc-tab.long { width: 182px; }
.doc-tab.first { width: 70px; margin-left: -12px; }
.doc-tab.active { background: #3b4450; color: #f0f2f3; font-weight: 700; border-radius: 10px 10px 0 0; }
.doc-tab.active svg { color: #a3a9ae; }
.new-tab { width: 24px; height: 20px; margin: 0 0 3px 8px; border-radius: 4px 8px 8px 8px; background: #2d3640; }

/* Drawing area */
.canvas { position: relative; flex: 1; min-height: 600px; background: #000; overflow: hidden; }
.drawing { position: absolute; inset: 0; width: 100%; height: 100%; }
.symbols path { fill: none; stroke: #14c814; stroke-width: 1.5; }
.symbols .thick { stroke-width: 2; stroke: #17e817; }
.header-lines { fill: none; stroke: #080808; stroke-width: 1; }
.col-names, .row-names { font-family: Roboto, sans-serif; font-weight: 100; fill: #0a0a0a; text-anchor: middle; }
.col-names { font-size: 24px; }
.row-names { font-size: 30px; }
.grid-base { fill: none; stroke: #063c06; stroke-width: 2; }
.grid-dash { fill: none; stroke: #22bb22; stroke-width: 1; stroke-dasharray: 3 2; }
.grips path { fill: #0a7cf5; }
.grips .row-grip { fill: #18aaf0; }
.cursor { fill: none; stroke: #e8e8e8; }

.legend {
  position: absolute;
  left: 935px;
  top: 20px;
  padding: 9px 9px 5px;
  background: #fcfcfc;
  color: #333;
}
.legend table {
  height: 368px;
  width: 560px;
  table-layout: fixed;
  border-collapse: collapse;
  font: 300 19px/24px Roboto, "Noto Sans CJK SC", sans-serif;
}
.legend tr { height: 36px; }
.legend th { height: 37px; }
.legend th, .legend td { border: 1px solid #555; padding: 7px 0 0 9px; text-align: left; font-weight: 300; white-space: nowrap; }
.legend th, .legend td:nth-child(3), .legend td:nth-child(5) { font-size: 13px; font-weight: 400; }
.legend th:nth-child(-n+2), .legend td:nth-child(-n+2) { text-align: center; padding-left: 0; }
.legend th:first-child { padding-right: 8px; }
.legend td:first-child { font-size: 24px; font-weight: 300; }
.legend td:nth-child(2) { padding: 0 6px 0 0; }
.legend td:nth-child(5) { font-size: 18px; font-weight: 500; }
.legend .small { font-size: 8px; font-weight: 700; line-height: 10px; }
.legend svg { width: 48px; height: 28px; margin: 0 auto; }
.legend text { font: 700 11px "Liberation Serif", serif; fill: #3be83b; text-anchor: middle; }
.c-no { width: 49px; }
.c-symbol { width: 66px; }
.c-name { width: 133px; }
.c-spec { width: 144px; }
.ln { fill: none; stroke: #3fea3f; stroke-width: 1.3; }
.thin { fill: none; stroke: #86e886; stroke-width: 1; }
.bar { fill: none; stroke: #00f000; stroke-width: 3; }
.bar.wide { stroke-width: 5; }
.fl { fill: #00f800; }

/* Command line */
.command { position: absolute; left: 112px; right: 113px; bottom: 1px; display: flex; height: 82px; }
.command-side {
  width: 31px;
  padding: 5px 3px 0 0;
  display: flex;
  flex-direction: column;
  align-items: center;
  gap: 10px;
  background: #222a33;
  color: #c8ccd0;
}
.grip-dots { width: 22px; height: 6px; background: radial-gradient(circle at 1px 1px, #a8aeb3 1px, transparent 1px) 0 0 / 4px 4px; }
.command-main { flex: 1; display: flex; flex-direction: column; background: #8a8a8a; color: #111; border-top: 1px solid #777; }
.history { flex: 1; display: flex; flex-direction: column; justify-content: flex-end; padding: 0 4px 1px; font: 15px/20px "DejaVu Sans Mono", "Noto Sans CJK SC", monospace; }
.history p { margin: 0; white-space: pre; height: 20px; }
.history b { font-size: 16px; font-weight: 400; }
.prompt { height: 24px; display: flex; align-items: center; padding: 0 5px; background: #aeaeae; border-top: 1px solid #333; color: #444; }
.prompt button { gap: 2px; }
.prompt input { flex: 1; padding-left: 10px; font-size: 16px; }
.prompt input::placeholder { color: #666; font-style: italic; opacity: 1; }

/* Status bar */
.statusbar {
  height: 38px;
  display: flex;
  justify-content: flex-end;
  gap: 4px;
  padding-top: 3px;
  margin-right: -13px;
  border-top: 1px solid #34404b;
  background: #212a34;
}
.group { display: flex; height: 28px; flex: none; gap: 2px; background: #37414c; }
.group button { width: 28px; height: 28px; }
.group .model { width: 38px; font-weight: 500; color: #fff; }
.group .drop { width: 20px; }
.group .iso { width: 24px; }
.group .slim { width: 18px; }
.group .on { background: #5585b8; }
.group button > svg:not(.caret-m) { width: 20px; height: 20px; fill: none; stroke: #dfe3e6; stroke-width: 1.3; }
.group .dots { stroke-width: 3; stroke-dasharray: 3 4; }
.group use { stroke: none; }
```
